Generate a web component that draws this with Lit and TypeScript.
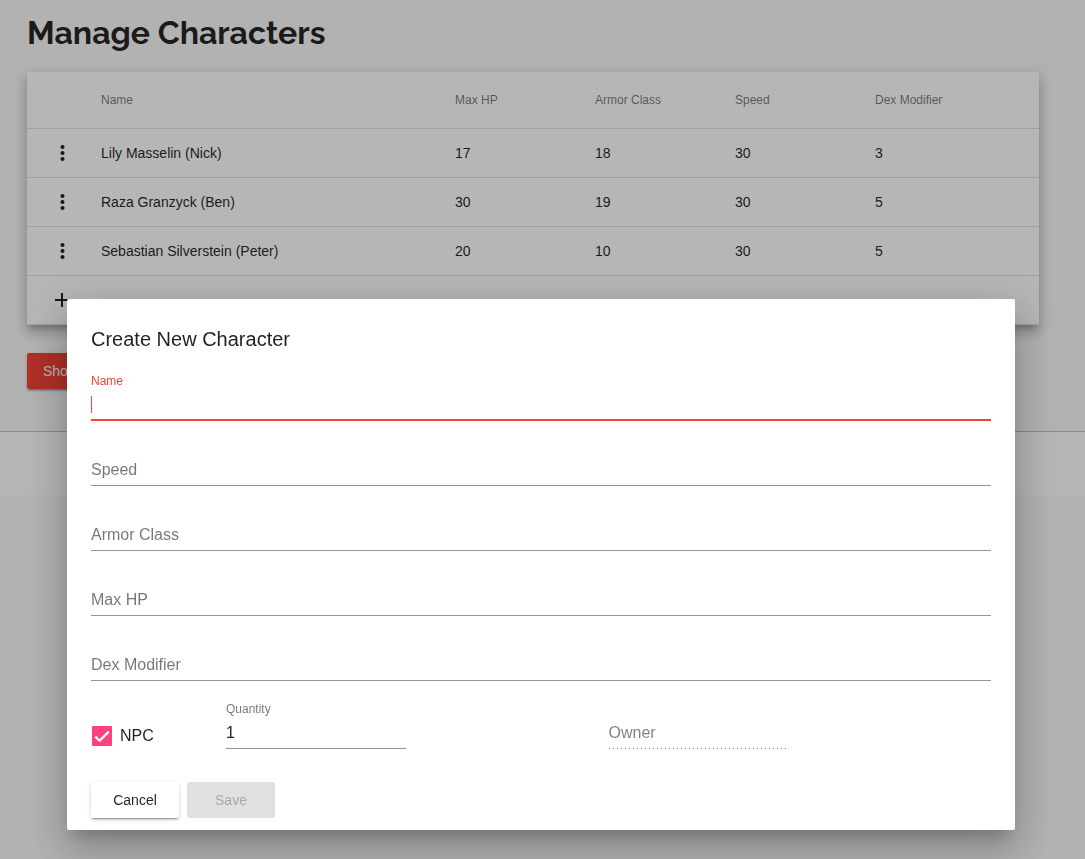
import { LitElement, html, css, nothing } from "lit";
import { customElement, property, state } from "lit/decorators.js";

interface Character {
  name: string;
  maxHp: number;
  armorClass: number;
  speed: number;
  dexModifier: number;
}

@customElement("form-field")
class FormField extends LitElement {
  @property() label = "";
  @property() value = "";
  @property({ type: Boolean }) active = false;
  @property({ type: Boolean }) disabled = false;

  static styles = css`
    :host {
      display: block;
    }
    .field {
      display: grid;
      grid-template-rows: 16px 18px;
      row-gap: 7px;
      padding: 17px 0 6px;
      border-bottom: 1px solid #949494;
      color: rgba(0, 0, 0, 0.54);
    }
    .field.active {
      padding-bottom: 5px;
      border-bottom: 2px solid #f44336;
      color: #f44336;
    }
    .field.disabled {
      padding-bottom: 6px;
      border-bottom: 0;
      color: rgba(0, 0, 0, 0.5);
    }
    .dots {
      height: 1px;
      background: linear-gradient(to right, rgba(0, 0, 0, 0.5) 0 1px, transparent 1px) 0 0 / 4px 1px repeat-x;
    }
    label {
      grid-area: 2 / 1;
      font-size: 16px;
      line-height: 18px;
      pointer-events: none;
    }
    .floating label {
      grid-area: 1 / 1;
      font-size: 12px;
      line-height: 16px;
    }
    input {
      grid-area: 2 / 1;
      width: 100%;
      min-width: 0;
      margin: 0;
      padding: 0;
      border: 0;
      outline: 0;
      background: none;
      font: inherit;
      font-size: 16px;
      line-height: 18px;
      color: rgba(0, 0, 0, 0.87);
      caret-color: #f44336;
    }
    .caret {
      grid-area: 2 / 1;
      width: 1px;
      height: 17px;
      background: #f44336;
    }
  `;

  render() {
    const floating = this.active || this.value !== "";
    return html`
      <div class="field ${this.active ? "active" : ""} ${floating ? "floating" : ""} ${this.disabled ? "disabled" : ""}">
        <label for="control">${this.label}</label>
        <input id="control" type="text" .value=${this.value} ?disabled=${this.disabled} autocomplete="off" />
        ${this.active ? html`<span class="caret" aria-hidden="true"></span>` : nothing}
      </div>
      ${this.disabled ? html`<div class="dots"></div>` : nothing}
    `;
  }
}

@customElement("app-root")
class AppRoot extends LitElement {
  @state() private characters: Character[] = [
    { name: "Lily Masselin (Nick)", maxHp: 17, armorClass: 18, speed: 30, dexModifier: 3 },
    { name: "Raza Granzyck (Ben)", maxHp: 30, armorClass: 19, speed: 30, dexModifier: 5 },
    { name: "Sebastian Silverstein (Peter)", maxHp: 20, armorClass: 10, speed: 30, dexModifier: 5 },
  ];

  static styles = css`
    :host {
      display: block;
      min-height: 100vh;
      background: #fafafa;
      font-family: "Liberation Sans", Arial, sans-serif;
      font-size: 14px;
      color: rgba(0, 0, 0, 0.87);
    }
    main {
      padding: 13px 46px 42px 27px;
    }
    h1 {
      margin: 0 0 19px;
      font-family: Raleway, Lato, sans-serif;
      font-size: 32px;
      line-height: 40px;
      font-weight: 700;
    }
    table {
      width: 100%;
      table-layout: fixed;
      border-collapse: separate;
      border-spacing: 0;
      margin-bottom: 28px;
      background: #fff;
      box-shadow: 0 5px 5px -3px rgba(0, 0, 0, 0.2), 0 8px 10px 1px rgba(0, 0, 0, 0.14),
        0 3px 14px 2px rgba(0, 0, 0, 0.12);
    }
    th,
    td {
      height: 48px;
      padding: 0;
      border-bottom: 1px solid rgba(0, 0, 0, 0.12);
      text-align: left;
      font-weight: 400;
    }
    th {
      height: 56px;
      font-size: 12px;
      color: rgba(0, 0, 0, 0.54);
    }
    .col-menu {
      width: 74px;
    }
    .col-stat {
      width: 140px;
    }
    .col-last {
      width: 164px;
    }
    .icon-button {
      display: block;
      margin-left: 23px;
      padding: 0;
      border: 0;
      background: none;
      color: inherit;
    }
    .icon-button svg {
      display: block;
      width: 24px;
      height: 24px;
      fill: currentColor;
    }
    .button {
      min-width: 88px;
      padding: 0 16px;
      border: 0;
      border-radius: 2px;
      background: #fff;
      font: inherit;
      line-height: 36px;
      color: inherit;
      box-shadow: 0 3px 1px -2px rgba(0, 0, 0, 0.2), 0 2px 2px 0 rgba(0, 0, 0, 0.14),
        0 1px 5px 0 rgba(0, 0, 0, 0.12);
    }
    .button.warn {
      display: block;
      background: #f44336;
      color: #fff;
      text-align: left;
    }
    .button:disabled {
      background: #e0e0e0;
      color: rgba(0, 0, 0, 0.26);
      box-shadow: none;
    }
    footer {
      height: 63px;
      border-top: 1px solid #c3c3c3;
      background: #fff;
    }
    .backdrop {
      position: fixed;
      inset: 0;
      display: flex;
      align-items: flex-end;
      padding: 0 70px 29px 67px;
      background: rgba(0, 0, 0, 0.288);
    }
    .dialog {
      flex: 1;
      padding: 24px 24px 12px;
      border-radius: 2px;
      background: #fff;
      box-shadow: 0 11px 15px -7px rgba(0, 0, 0, 0.2), 0 24px 38px 3px rgba(0, 0, 0, 0.14),
        0 9px 46px 8px rgba(0, 0, 0, 0.12);
    }
    h2 {
      margin: 0 0 1px;
      font-size: 20px;
      line-height: 32px;
      font-weight: 400;
    }
    .options {
      display: grid;
      grid-template-columns: 15% 42.5% 1fr;
      margin: 3px 0 33px;
    }
    .short {
      width: 180px;
    }
    .check {
      display: flex;
      align-items: center;
      gap: 8px;
      padding: 38px 0 0 1px;
      font-size: 16px;
    }
    .tick {
      display: grid;
      width: 20px;
      height: 20px;
    }
    .tick input {
      grid-area: 1 / 1;
      appearance: none;
      width: 20px;
      height: 20px;
      margin: 0;
      border: 2px solid rgba(0, 0, 0, 0.54);
      border-radius: 1px;
    }
    .tick input:checked {
      border-color: #ff4081;
      background: #ff4081;
    }
    .tick svg {
      grid-area: 1 / 1;
      width: 20px;
      height: 20px;
      fill: none;
      stroke: #fff;
      stroke-width: 2.2;
      pointer-events: none;
    }
    .actions {
      display: flex;
      gap: 8px;
    }
  `;

  private renderRow(c: Character) {
    return html`
      <tr>
        <td>
          <button class="icon-button" aria-label="Options for ${c.name}">
            <svg viewBox="0 0 24 24">
              <path
                d="M12.5 8c1.1 0 2-.9 2-2s-.9-2-2-2-2 .9-2 2 .9 2 2 2zm0 2c-1.1 0-2 .9-2 2s.9 2 2 2 2-.9 2-2-.9-2-2-2zm0 6c-1.1 0-2 .9-2 2s.9 2 2 2 2-.9 2-2-.9-2-2-2z"
              />
            </svg>
          </button>
        </td>
        <td>${c.name}</td>
        <td>${c.maxHp}</td>
        <td>${c.armorClass}</td>
        <td>${c.speed}</td>
        <td>${c.dexModifier}</td>
      </tr>
    `;
  }

  render() {
    return html`
      <main>
        <h1>Manage Characters</h1>
        <table>
          <thead>
            <tr>
              <th class="col-menu"></th>
              <th>Name</th>
              <th class="col-stat">Max HP</th>
              <th class="col-stat">Armor Class</th>
              <th class="col-stat">Speed</th>
              <th class="col-last">Dex Modifier</th>
            </tr>
          </thead>
          <tbody>
            ${this.characters.map((c) => this.renderRow(c))}
            <tr>
              <td colspan="6">
                <button class="icon-button" aria-label="Add character">
                  <svg viewBox="0 0 24 24"><path d="M19 13h-6v6h-2v-6H5v-2h6V5h2v6h6v2z" /></svg>
                </button>
              </td>
            </tr>
          </tbody>
        </table>
        <button class="button warn">Show</button>
      </main>
      <footer></footer>

      <div class="backdrop">
        <form class="dialog" role="dialog" aria-labelledby="dialog-title" @submit=${(e: Event) => e.preventDefault()}>
          <h2 id="dialog-title">Create New Character</h2>
          <form-field label="Name" active></form-field>
          <form-field label="Speed"></form-field>
          <form-field label="Armor Class"></form-field>
          <form-field label="Max HP"></form-field>
          <form-field label="Dex Modifier"></form-field>
          <div class="options">
            <label class="check">
              <span class="tick">
                <input type="checkbox" checked />
                <svg viewBox="0 0 20 20"><path d="M3.4 10.6 7.6 14.8 16.8 5.6" /></svg>
              </span>
              NPC
            </label>
            <form-field class="short" label="Quantity" value="1"></form-field>
            <form-field class="short" label="Owner" disabled></form-field>
          </div>
          <div class="actions">
            <button class="button" type="button">Cancel</button>
            <button class="button" type="submit" disabled>Save</button>
          </div>
        </form>
      </div>
    `;
  }
}
